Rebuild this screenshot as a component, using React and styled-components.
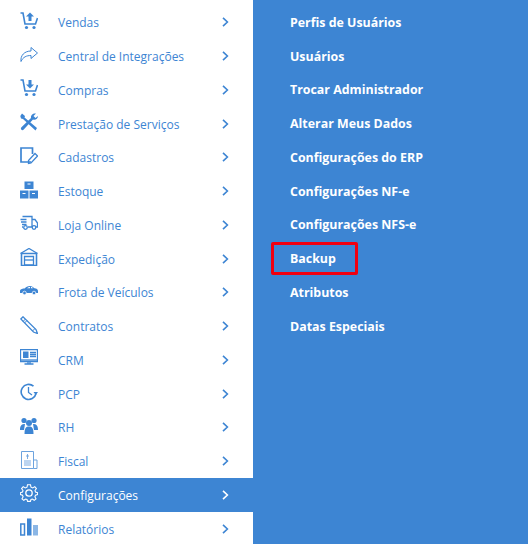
import React from 'react';
import styled, { createGlobalStyle } from 'styled-components';

const BLUE = '#3d85d3';

const GlobalStyle = createGlobalStyle`
html, body {
    margin: 0;
    padding: 0;
    background: #fff;
}
`;

const Page = styled.div`
width: 528px;
height: 544px;
display: flex;
overflow: hidden;
font-family: "Open Sans", sans-serif;
`;

const Sidebar = styled.ul`
width: 253px;
flex: none;
margin: 0;
padding: 5.5px 0 0;
list-style: none;
background: #fff;
`;

const MenuRow = styled.li`
height: 33.75px;
display: flex;
align-items: center;
padding: 0 20px;
color: ${({ $active }) => ($active ? '#fff' : BLUE)};
background: ${({ $active }) => ($active ? BLUE : 'transparent')};
`;

const IconBox = styled.span`
width: 18px;
height: 18px;
flex: none;
display: block;
margin: 0 20px 3px 0;
svg {
    display: block;
    width: 18px;
    height: 18px;
}
`;

const MenuLabel = styled.span`
flex: 1;
padding-top: 1px;
font-size: 12px;
white-space: nowrap;
`;

const Chevron = styled.svg`
width: 7px;
height: 10px;
flex: none;
margin-right: 4.5px;
`;

const SubPanel = styled.ul`
flex: 1;
margin: 0;
padding: 5.5px 0 0 37px;
list-style: none;
background: ${BLUE};
`;

const SubItem = styled.li`
position: relative;
height: 33.75px;
display: flex;
align-items: center;
color: #fff;
font-size: 12.4px;
font-weight: 700;
white-space: nowrap;
`;

const Highlight = styled.span`
position: absolute;
left: -19px;
top: 0;
width: 87px;
height: 33px;
box-sizing: border-box;
border: 3px solid #f00010;
border-radius: 2px;
`;

const s = { fill: 'none', stroke: 'currentColor', strokeWidth: 1.3 };

const Cart = ({ up }) => (
    <svg viewBox="0 0 18 18">
        <path d="M0.5 1H3L5 12H15.5L17.5 6" {...s} strokeWidth="1.6" />
        <circle cx="6.5" cy="15.5" r="1.6" fill="currentColor" />
        <circle cx="14" cy="15.5" r="1.6" fill="currentColor" />
        {up
            ? <path d="M10 0.5L14 4.5H11.5V9H8.5V4.5H6Z" fill="currentColor" />
            : <path d="M10 9.5L14 5.5H11.5V1H8.5V5.5H6Z" fill="currentColor" />}
    </svg>
);

const ICONS = {
    vendas: <Cart up />,
    integracoes: (
        <svg viewBox="0 0 18 18">
            <path d="M11 1.5L17.5 7L11 12.5V9.5C6.5 9.5 3 11 1 15.5C0.2 9.5 4.5 5 11 5Z" {...s} strokeWidth="1" />
        </svg>
    ),
    compras: <Cart />,
    servicos: (
        <svg viewBox="0 0 18 18">
            <path d="M2 0.5L5 3L4.5 4.5L17 15L15.5 17.5L3 6L1 5.5L0.3 3Z" fill="currentColor" />
            <path d="M18 3C18 6 15 7.5 13 6.5L3.5 16.8C2.2 18 0 16 1.2 14.5L11 5C10.5 2 13 0 16 0.5L13.5 3L15.5 5Z" fill="currentColor" />
        </svg>
    ),
    cadastros: (
        <svg viewBox="0 0 18 18">
            <path d="M11 15H1V1H12.5V7" {...s} strokeWidth="1.7" />
            <path d="M15 6.5L17.5 9L11 16L8.5 16.5V13.5Z" {...s} />
        </svg>
    ),
    estoque: (
        <svg viewBox="0 0 18 18">
            <path d="M4.5 0.5H13.5V8H4.5ZM0 9.5H8.5V17.5H0ZM9.5 9.5H18V17.5H9.5Z" fill="currentColor" />
            <path d="M7.5 3H10.5M2.5 12.5H5.5M12 12.5H15" stroke="#fff" strokeWidth="1.2" />
        </svg>
    ),
    loja: (
        <svg viewBox="0 0 18 18">
            <path d="M2.5 2.5H12V13H8M12 5.5H15L17.5 9V13H16M12 13H12.5M2 13H3" {...s} />
            <path d="M0.5 5.5H6.5M1 8H6.5M2 10.5H6.5" {...s} />
            <circle cx="5.5" cy="13.5" r="1.8" {...s} />
            <circle cx="14" cy="13.5" r="1.8" {...s} />
        </svg>
    ),
    expedicao: (
        <svg viewBox="0 0 18 18">
            <path d="M0.5 5.5L9 0.5L17.5 5.5" {...s} />
            <path d="M1.5 5.5H16.5V17.5H1.5Z" {...s} strokeWidth="1.6" />
            <path d="M4.5 8.5H13.5V17H4.5Z" {...s} />
            <path d="M4.5 12H13.5" {...s} />
        </svg>
    ),
    frota: (
        <svg viewBox="0 0 18 18">
            <path d="M0 8.5C0.5 7 3 6.5 4.5 6.5C6 5 7.5 4 10 4C12 4 13 5 14.5 6.3C16.5 6.5 18 7.5 18 9V11H0Z" fill="currentColor" />
            <path d="M7 6.3C8 5.3 9 5 10 5V6.3ZM11 5C12 5 12.5 5.5 13 6.3H11Z" fill="#fff" />
            <circle cx="4.5" cy="11" r="1.8" fill="currentColor" stroke="#fff" strokeWidth="0.7" />
            <circle cx="14" cy="11" r="1.8" fill="currentColor" stroke="#fff" strokeWidth="0.7" />
        </svg>
    ),
    contratos: (
        <svg viewBox="0 0 18 18">
            <path d="M0.8 3L3 0.8L16 13.5L17.5 17.5L13.5 16Z" {...s} />
            <path d="M3 5.5L5.5 3M4.5 7L7 4.5M12.5 15L15 12.5" {...s} strokeWidth="1" />
        </svg>
    ),
    crm: (
        <svg viewBox="0 0 18 18">
            <path d="M0.5 0.5H17.5V12.5H0.5Z" {...s} />
            <path d="M0.5 11H17.5" {...s} />
            <path d="M3 2.5H8.5V9H3Z" fill="currentColor" />
            <path d="M10 3.5H16M10 5.5H16M10 7.5H16M4.5 15H13.5M8 13V15M10 13V15" {...s} />
        </svg>
    ),
    pcp: (
        <svg viewBox="0 0 18 18">
            <path d="M16 10.5A7.5 7.5 0 1 1 13.5 3.2" {...s} strokeWidth="1.6" />
            <path d="M8.5 4V9.5L12 12" {...s} />
            <path d="M13.5 9H18L15.8 12Z" fill="currentColor" />
        </svg>
    ),
    rh: (
        <svg viewBox="0 0 18 18">
            <circle cx="4" cy="3.5" r="2.6" fill="currentColor" />
            <circle cx="14" cy="3.5" r="2.6" fill="currentColor" />
            <circle cx="9" cy="6" r="3" fill="currentColor" />
            <path d="M0 13C0 8 2 7 5 7L4 13ZM18 13C18 8 16 7 13 7L14 13Z" fill="currentColor" />
            <path d="M4.5 17C4.5 11 6 9.5 9 9.5C12 9.5 13.5 11 13.5 17Z" fill="currentColor" />
        </svg>
    ),
    fiscal: (
        <svg viewBox="0 0 18 18" opacity="0.75">
            <path d="M1.5 0.5H13.5V17.5H1.5Z" {...s} strokeWidth="1" />
            <path d="M13.5 9H17V17.5H13.5" {...s} strokeWidth="1" />
            <path d="M4 10H11M4 12H11M4 14H11M7.5 3V8M6 5H9" {...s} strokeWidth="0.9" />
        </svg>
    ),
    config: (
        <svg viewBox="0 0 18 18">
            <circle cx="9" cy="9" r="3.2" {...s} />
            <path d="M7.5 0.8H10.5L11 3.2L12.7 3.9L14.8 2.6L16.4 4.6L15 6.5L15.5 8L17.6 8.6V10.6L15.5 11.2L14.9 12.7L16 14.8L14.2 16.3L12.4 15L11 15.5L10.4 17.4H7.6L7 15.5L5.6 15L3.8 16.3L2 14.8L3.1 12.7L2.5 11.2L0.4 10.6V8.6L2.5 8L3 6.5L1.6 4.6L3.2 2.6L5.3 3.9L7 3.2Z" {...s} strokeWidth="1.1" />
        </svg>
    ),
    relatorios: (
        <svg viewBox="0 0 18 18">
            <path d="M0.8 6H4.5V17H0.8Z" {...s} strokeWidth="1.5" />
            <path d="M7 0.5H11.5V17.5H7Z" fill="currentColor" />
            <path d="M13 7H18V17.5H13Z" fill="currentColor" opacity="0.6" />
        </svg>
    ),
};

const MENU = [
    ['vendas', 'Vendas'],
    ['integracoes', 'Central de Integrações'],
    ['compras', 'Compras'],
    ['servicos', 'Prestação de Serviços'],
    ['cadastros', 'Cadastros'],
    ['estoque', 'Estoque'],
    ['loja', 'Loja Online'],
    ['expedicao', 'Expedição'],
    ['frota', 'Frota de Veículos'],
    ['contratos', 'Contratos'],
    ['crm', 'CRM'],
    ['pcp', 'PCP'],
    ['rh', 'RH'],
    ['fiscal', 'Fiscal'],
    ['config', 'Configurações'],
    ['relatorios', 'Relatórios'],
];

const SUBMENU = [
    'Perfis de Usuários',
    'Usuários',
    'Trocar Administrador',
    'Alterar Meus Dados',
    'Configurações do ERP',
    'Configurações NF-e',
    'Configurações NFS-e',
    'Backup',
    'Atributos',
    'Datas Especiais',
];

export default function App() {
    return (
        <Page>
            <GlobalStyle />
            <Sidebar>
                {MENU.map(([key, label]) => (
                    <MenuRow key={key} $active={key === 'config'}>
                        <IconBox>{ICONS[key]}</IconBox>
                        <MenuLabel>{label}</MenuLabel>
                        <Chevron viewBox="0 0 7 10">
                            <path d="M1 0.8L5.4 5L1 9.2" fill="none" stroke="currentColor" strokeWidth="1.6" />
                        </Chevron>
                    </MenuRow>
                ))}
            </Sidebar>
            <SubPanel>
                {SUBMENU.map((label) => (
                    <SubItem key={label}>
                        {label}
                        {label === 'Backup' && <Highlight />}
                    </SubItem>
                ))}
            </SubPanel>
        </Page>
    );
}
